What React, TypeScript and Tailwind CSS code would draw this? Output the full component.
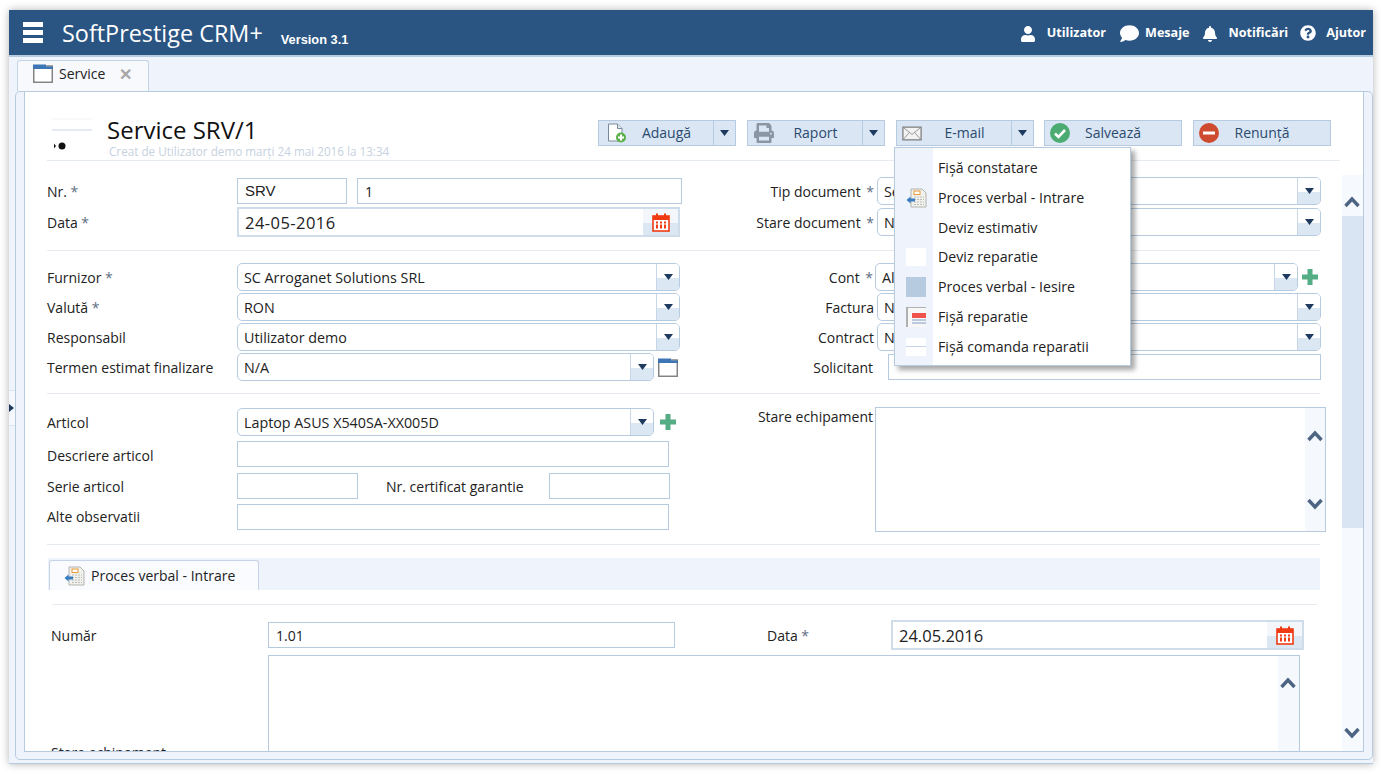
import React from "react";
import { FaUser, FaComment, FaBell, FaQuestionCircle, FaPrint } from "react-icons/fa";

const Arrow = () => (
  <svg width="9" height="6" viewBox="0 0 12 7" className="block" preserveAspectRatio="none">
    <path d="M0 0H12L6 7Z" fill="#1f3a5f" />
  </svg>
);

const Up = ({ down }: { down?: boolean }) => (
  <svg width="16" height="12" viewBox="0 0 16 12" className="block">
    <path d={down ? "M1.5 2L8 9L14.5 2" : "M1.5 10L8 3L14.5 10"} fill="none" stroke="#4d6483" strokeWidth="3.4" />
  </svg>
);

const Calendar = () => (
  <svg width="18" height="19" viewBox="0 0 18 19" className="block">
    <rect x="1" y="3" width="16" height="15" fill="#fff" stroke="#f03a12" strokeWidth="1.6" />
    <rect x="1" y="3" width="16" height="4" fill="#f03a12" />
    <rect x="4" y="0.5" width="2" height="4" fill="#f03a12" />
    <rect x="12" y="0.5" width="2" height="4" fill="#f03a12" />
    {[4, 8, 12].map((x) => (
      <g key={x} fill="#f03a12">
        <rect x={x} y="8.5" width="2" height="2" />
        <rect x={x} y="11.5" width="2" height="4" />
      </g>
    ))}
  </svg>
);

const WindowIcon = () => (
  <svg width="20" height="19" viewBox="0 0 20 19" className="block shrink-0">
    <rect x="0.75" y="2" width="18.5" height="16.25" fill="#fff" stroke="#7d7d7d" strokeWidth="1.4" />
    <path d="M0 0.5H13V2.5H20V5H0Z" fill="#3c76b4" />
  </svg>
);

const DocIcon = () => (
  <svg width="22" height="20" viewBox="0 0 22 20" className="block">
    <path d="M5 1H16L20 5V19H5Z" fill="#f1f1ee" stroke="#b3b3ad" />
    <rect x="8" y="3" width="6" height="3.5" fill="#fff" stroke="#eb9a34" />
    <path d="M8 9H18M8 11.5H18M8 14H18M8 16.5H18" stroke="#bdbdb8" strokeDasharray="2 1" />
    <path d="M0.5 12L4.5 8.5V10.5H9V13.5H4.5V15.5Z" fill="#3a7cc0" />
  </svg>
);

const Plus = () => (
  <svg width="18" height="18" viewBox="0 0 18 18" className="block">
    <path d="M6.5 1H11.5V6.5H17V11.5H11.5V17H6.5V11.5H1V6.5H6.5Z" fill="#55ad85" />
  </svg>
);

const Select = ({ value, className }: { value: string; className: string }) => (
  <div className={`flex h-[28px] shrink-0 overflow-hidden rounded-[5px] border border-[#b7cbe0] bg-white ${className}`}>
    <div className="min-w-0 flex-1 truncate pl-[6px] text-[14.3px] leading-[27px] text-[#222]">{value}</div>
    <div className="flex w-[23px] items-center justify-center border-l border-[#c8d7e8] bg-[linear-gradient(#ffffff_0%,#ffffff_52%,#dce7f4_52%,#dce7f4_100%)]">
      <Arrow />
    </div>
  </div>
);

const Input = ({ value, className, style }: { value?: string; className: string; style?: string }) => (
  <div className={`shrink-0 border border-[#b7cbe0] bg-white pl-[7px] text-[#222] ${className} ${style ?? "h-[26px] text-[14px] leading-[26px]"}`}>
    {value}
  </div>
);

const DateField = ({ value, className, valueClass }: { value: string; className: string; valueClass?: string }) => (
  <div className={`flex h-[30px] shrink-0 border-2 border-[#cfdcea] bg-white ${className}`}>
    <div className={`flex-1 pl-[6px] text-[16.5px] leading-[27px] text-[#222] ${valueClass ?? ""}`}>{value}</div>
    <div className="flex w-[35px] items-center justify-center bg-[linear-gradient(#f3f6fb_0%,#f3f6fb_55%,#dce7f4_55%,#dce7f4_100%)]">
      <Calendar />
    </div>
  </div>
);

const Label = ({ children, className }: { children: React.ReactNode; className: string }) => (
  <div className={`shrink-0 text-[14px] text-[#222] ${className}`}>{children}</div>
);

const Star = ({ wide }: { wide?: boolean }) => <span className={`text-[#5f6f85] ${wide ? "ml-[2px]" : ""}`}>*</span>;

const Sep = ({ className }: { className: string }) => <div className={`h-px bg-[#e6ebf1] ${className}`} />;

const ActionButton = ({ icon, label, split, className }: { icon: React.ReactNode; label: string; split?: boolean; className?: string }) => (
  <div className={`flex h-[26px] w-[138px] border border-[#b7cbe0] bg-[#dae6f4] text-[14px] text-[#2b4a6f] ${className ?? ""}`}>
    <div className="flex w-[29px] shrink-0 items-center justify-end">{icon}</div>
    <div className={`flex-1 text-center leading-[24px] ${split ? "pr-[8px]" : "pr-[29px]"}`}>{label}</div>
    {split && (
      <div className="flex w-[22px] shrink-0 items-center justify-center border-l border-[#b7cbe0]">
        <Arrow />
      </div>
    )}
  </div>
);

const AddIcon = () => (
  <svg width="20" height="20" viewBox="0 0 20 20" className="mr-[1px] block">
    <path d="M1.5 1H10.5L15 5.5V18H1.5Z" fill="#fdfdfd" stroke="#7a8a9c" />
    <path d="M10.5 1V5.5H15" fill="#dfe6ee" stroke="#7a8a9c" />
    <circle cx="14" cy="14.5" r="5" fill="#5bb04a" />
    <path d="M14 11.5V17.5M11 14.5H17" stroke="#fff" strokeWidth="2" />
  </svg>
);

const MailIcon = () => (
  <svg width="20" height="15" viewBox="0 0 22 16" className="mr-[4px] block">
    <rect x="1" y="1" width="20" height="14" fill="#f2f2f2" stroke="#7f7f7f" strokeWidth="1.4" />
    <path d="M1 1L11 9L21 1M1 15L8 7M21 15L14 7" fill="none" stroke="#8f8f8f" />
  </svg>
);

const CheckIcon = () => (
  <svg width="20" height="20" viewBox="0 0 20 20" className="mr-[4px] block">
    <circle cx="10" cy="10" r="10" fill="#4bab71" />
    <path d="M5 10.5L8.5 14L15 7" fill="none" stroke="#fff" strokeWidth="2.6" />
  </svg>
);

const StopIcon = () => (
  <svg width="20" height="20" viewBox="0 0 20 20" className="mr-[4px] block">
    <circle cx="10" cy="10" r="10" fill="#cf4b30" />
    <rect x="4" y="8.5" width="12" height="3" fill="#fff" />
  </svg>
);

const menuItems = [
  "Fișă constatare",
  "Proces verbal - Intrare",
  "Deviz estimativ",
  "Deviz reparatie",
  "Proces verbal - Iesire",
  "Fișă reparatie",
  "Fișă comanda reparatii",
];

const MenuIcon = ({ index }: { index: number }) => {
  if (index === 1) return <DocIcon />;
  if (index === 3) return <div className="h-[18px] w-[20px] bg-white" />;
  if (index === 4) return <div className="h-[20px] w-[20px] bg-[#b7cbe0]" />;
  if (index === 5)
    return (
      <svg width="20" height="20" viewBox="0 0 20 20" className="block">
        <rect x="1" y="0" width="19" height="20" fill="#f7f7f7" />
        <path d="M1 20V0H20" fill="none" stroke="#9a9a9a" strokeWidth="1.5" />
        <rect x="6" y="6" width="14" height="5" fill="#f0524c" />
        <path d="M6 13H20M6 16H20" stroke="#7f9cc0" />
      </svg>
    );
  if (index === 6)
    return (
      <div className="flex h-[18px] w-[20px] flex-col justify-center bg-white">
        <div className="h-px bg-[#c5d5e8]" />
      </div>
    );
  return null;
};

const App = () => (
  <div className="relative h-[774px] w-[1381px] overflow-hidden bg-white font-['Open_Sans',sans-serif]">
    <div className="relative ml-[9px] mt-[10px] h-[754px] w-[1364px] border-b border-[#b7cbe0] bg-[#eff3fb] shadow-[0_0_8px_rgba(0,0,0,0.3)]">
      <header className="flex h-[45px] items-center bg-[#2a5582] pl-[14px] text-white">
        <div className="flex w-[20px] flex-col gap-[3px]">
          <div className="h-[5px] bg-white" />
          <div className="h-[5px] bg-white" />
          <div className="h-[5px] bg-white" />
        </div>
        <div className="ml-[19px] mt-[2px] text-[23.4px] font-normal leading-[43px]">SoftPrestige CRM+</div>
        <div className="ml-[18px] mt-[15px] font-['Liberation_Sans',sans-serif] text-[12.8px] font-bold">Version 3.1</div>
        <div className="ml-auto mt-[2px] flex items-center pr-[7px] text-[12.6px] font-bold">
          <FaUser size={16} />
          <span className="ml-[11px]">Utilizator</span>
          <FaComment size={19} className="ml-[14px]" />
          <span className="ml-[6px]">Mesaje</span>
          <FaBell size={16} className="ml-[13px]" />
          <span className="ml-[10px]">Notificări</span>
          <FaQuestionCircle size={16} className="ml-[12px] mt-[-2px]" />
          <span className="ml-[10px]">Ajutor</span>
        </div>
      </header>
      <div className="h-[2px] bg-[#b7cbe0]" />
      <div className="flex h-[34px] items-end pl-[8px]">
        <div className="flex h-[31px] w-[132px] items-center rounded-t-[3px] border border-b-0 border-[#c4d4e6] bg-[#f7f9fd] pb-[5px] pl-[15px] text-[14px] text-[#222]">
          <WindowIcon />
          <span className="ml-[6px]">Service</span>
          <span className="ml-[14px] text-[16px] font-bold leading-none text-[#a8a8a8]">✕</span>
        </div>
      </div>
      <main className="ml-[6px] h-[669px] w-[1358px] rounded-[5px] border border-[#b7cbe0] px-[8px] pb-[7px]">
        <div className="relative h-[660px] w-[1340px] overflow-hidden border border-t-0 border-[#b7cbe0] bg-white">
          <div className="flex h-[68px] pl-[27px]">
            <svg width="42" height="36" viewBox="0 0 42 36" className="mt-[26px] block shrink-0">
              <path d="M0 1H40" stroke="#f0f3f8" />
              <path d="M0 12H40" stroke="#dbe5f1" strokeWidth="1.4" />
              <circle cx="10" cy="28" r="3.5" fill="#111" />
              <path d="M2 25.5L4 28L2 30.5Z" fill="#111" />
            </svg>
            <div className="ml-[13px] mt-[21px]">
              <div className="text-[24px] leading-[34px] text-[#111]">Service SRV/1</div>
              <div className="ml-[2px] mt-[-3px] whitespace-nowrap text-[11.7px] leading-[14px] text-[#c6d2e0]">Creat de Utilizator demo marți 24 mai 2016 la 13:34</div>
            </div>
            <div className="ml-auto mr-[32px] mt-[28px] flex gap-[11px]">
              <ActionButton icon={<AddIcon />} label="Adaugă" split />
              <ActionButton icon={<FaPrint size={20} className="mr-[3px] text-[#8a96a2]" />} label="Raport" split />
              <ActionButton icon={<MailIcon />} label="E-mail" split />
              <ActionButton icon={<CheckIcon />} label="Salvează" className="ml-[-1px]" />
              <ActionButton icon={<StopIcon />} label="Renunță" />
            </div>
          </div>
          <Sep className="ml-[22px] mr-[23px]" />

          <div className="ml-[22px] w-[1274px]">
            <div className="mt-[15px] flex h-[30px] items-center">
              <Label className="w-[190px]">Nr. <Star /></Label>
              <Input value="SRV" className="w-[110px] font-['Liberation_Sans',sans-serif]" style="h-[26px] text-[15px] leading-[23px]" />
              <Input value="1" className="ml-[10px] w-[325px]" />
              <div className="flex-1" />
              <Label className="w-[192px] text-right">Tip document <Star wide /></Label>
              <Select value="Service" className="ml-[3px] w-[444px]" />
            </div>
            <div className="mt-px flex h-[30px] items-center">
              <Label className="w-[190px]">Data <Star /></Label>
              <DateField value="24-05-2016" className="w-[443px]" valueClass="tracking-[0.45px]" />
              <div className="flex-1" />
              <Label className="w-[192px] text-right">Stare document <Star wide /></Label>
              <Select value="Nou" className="ml-[3px] w-[444px]" />
            </div>
            <Sep className="mr-px mt-[13px]" />

            <div className="mt-[12px] flex flex-col gap-[2px]">
              <div className="flex h-[28px] items-center">
                <Label className="w-[190px]">Furnizor <Star /></Label>
                <Select value="SC Arroganet Solutions SRL" className="w-[443px]" />
                <div className="flex-1" />
                <Label className="w-[192px] text-right">Cont <Star wide /></Label>
                <Select value="Altele" className="ml-[2px] w-[423px]" />
                <div className="ml-[3px] mr-[2px]"><Plus /></div>
              </div>
              <div className="flex h-[28px] items-center">
                <Label className="w-[190px]">Valută <Star /></Label>
                <Select value="RON" className="w-[443px]" />
                <div className="flex-1" />
                <Label className="w-[192px] text-right">Factura</Label>
                <Select value="N/A" className="ml-[3px] w-[444px]" />
              </div>
              <div className="flex h-[28px] items-center">
                <Label className="w-[190px]">Responsabil</Label>
                <Select value="Utilizator demo" className="w-[443px]" />
                <div className="flex-1" />
                <Label className="w-[192px] text-right">Contract</Label>
                <Select value="N/A" className="ml-[3px] w-[444px]" />
              </div>
              <div className="flex h-[28px] items-center">
                <Label className="w-[190px]">Termen estimat finalizare</Label>
                <Select value="N/A" className="w-[417px]" />
                <div className="ml-[4px]"><WindowIcon /></div>
                <div className="flex-1" />
                <Label className="w-[190px] text-right">Solicitant</Label>
                <Input className="ml-[15px] w-[433px]" />
              </div>
            </div>
            <Sep className="mr-px mt-[12px]" />

            <div className="mt-[13px] flex">
              <div className="w-[633px] shrink-0 pt-px">
                <div className="flex h-[28px] items-center">
                  <Label className="w-[190px]">Articol</Label>
                  <Select value="Laptop ASUS X540SA-XX005D" className="w-[417px]" />
                  <div className="ml-[5px]"><Plus /></div>
                </div>
                <div className="mt-[5px] flex h-[26px] items-center">
                  <Label className="w-[190px] pt-[2px]">Descriere articol</Label>
                  <Input className="w-[432px]" />
                </div>
                <div className="mt-[6px] flex h-[26px] items-center">
                  <Label className="w-[190px]">Serie articol</Label>
                  <Input className="w-[121px]" />
                  <Label className="ml-[28px] w-[163px]">Nr. certificat garantie</Label>
                  <Input className="w-[121px]" />
                </div>
                <div className="mt-[5px] flex h-[26px] items-center">
                  <Label className="w-[190px] pb-[2px]">Alte observatii</Label>
                  <Input className="w-[432px]" />
                </div>
              </div>
              <Label className="ml-[-4px] w-[197px] text-right leading-[20px]">Stare echipament</Label>
              <div className="ml-[2px] flex h-[125px] w-[451px] shrink-0 border border-[#b7cbe0] bg-white">
                <div className="flex-1" />
                <div className="flex w-[20px] flex-col items-center justify-between bg-[#f5f8fd] px-[2px] pb-[21px] pt-[22px]">
                  <Up />
                  <Up down />
                </div>
              </div>
            </div>
            <Sep className="mr-px mt-[12px]" />

            <div className="ml-px mt-[13px] flex h-[32px] w-[1272px] items-end bg-[#eff3fb] pl-px">
              <div className="flex h-[30px] w-[210px] items-center rounded-t-[3px] border border-b-0 border-[#c4d4e6] bg-[#f9fbfe] pl-[14px] text-[14px] text-[#222]">
                <DocIcon />
                <span className="ml-[5px]">Proces verbal - Intrare</span>
              </div>
            </div>
            <Sep className="ml-[5px] mr-[4px] mt-[14px]" />

            <div className="ml-[4px]">
              <div className="mt-[15px] flex h-[30px] items-center">
                <Label className="w-[217px]">Număr</Label>
                <Input value="1.01" className="w-[407px]" />
                <Label className="ml-[92px] w-[124px]">Data <Star /></Label>
                <DateField value="24.05.2016" className="w-[413px]" />
              </div>
              <div className="mt-[5px] flex h-[195px]">
                <Label className="w-[217px] self-center">Stare echipament</Label>
                <div className="flex w-[1032px] shrink-0 border border-[#b7cbe0] bg-white">
                  <div className="flex-1" />
                  <div className="w-[21px] bg-[#f5f8fd] pl-[2px] pt-[21px]">
                    <Up />
                  </div>
                </div>
              </div>
            </div>
          </div>

          <div className="absolute right-0 top-[83px] flex h-[577px] w-[21px] flex-col bg-[#f6f9fd]">
            <div className="flex h-[41px] items-center justify-center pr-px pt-[13px]"><Up /></div>
            <div className="h-[312px] bg-[#dae5f3]" />
            <div className="mt-auto flex justify-center pb-[13px] pr-px"><Up down /></div>
          </div>

          <div className="absolute left-[869px] top-[55px] w-[237px] border border-[#b7cbe0] bg-white shadow-[4px_4px_5px_rgba(0,0,0,0.35)]">
            <div className="flex h-[217px]">
              <div className="flex w-[38px] shrink-0 flex-col bg-[#eff3fb] pl-[11px] pt-[5px]">
                {menuItems.map((item, i) => (
                  <div key={item} className="flex h-[29.8px] items-center"><MenuIcon index={i} /></div>
                ))}
              </div>
              <div className="flex-1 pl-[5px] pt-[5px]">
                {menuItems.map((item) => (
                  <div key={item} className="h-[29.8px] text-[14.2px] leading-[29px] text-[#222]">{item}</div>
                ))}
              </div>
            </div>
          </div>
        </div>
      </main>
      <div className="absolute left-0 top-[380px] flex h-[36px] w-[6px] items-center border-y border-[#dbe5f1] bg-[#f5f8fd]">
        <svg width="5" height="8" viewBox="0 0 5 8" className="block"><path d="M0 0L5 4L0 8Z" fill="#1f3a5f" /></svg>
      </div>
    </div>
  </div>
);

export default App;
